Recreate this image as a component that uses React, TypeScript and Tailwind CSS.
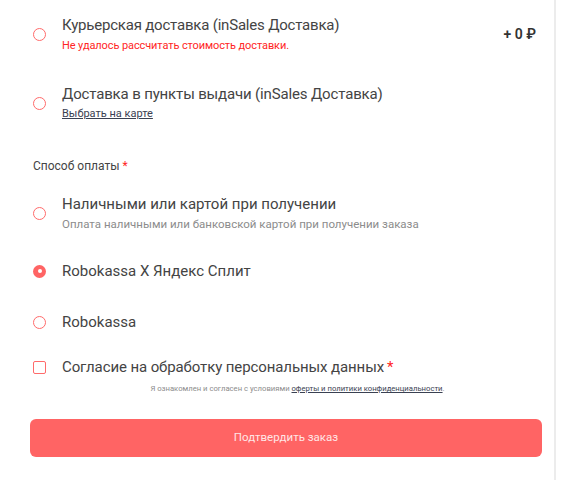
import React from "react";

function Radio({ checked = false }: { checked?: boolean }) {
  return checked ? (
    <span className="flex h-[13px] w-[13px] shrink-0 items-center justify-center rounded-full bg-[#ff6464]">
      <span className="h-[4px] w-[4px] rounded-full bg-white" />
    </span>
  ) : (
    <span className="block h-[13px] w-[13px] shrink-0 rounded-full border-[1.8px] border-[#ff6b6b]" />
  );
}

export default function App() {
  return (
    <div className="bg-white" style={{ fontFamily: "Roboto, 'Noto Sans', sans-serif" }}>
      <div className="flex h-[480px] w-[556px] flex-col border-r-2 border-[#ececec] pt-[15px]">
        <div className="flex items-center pl-[33px] pr-[18px]">
          <Radio />
          <div className="ml-[16px] flex-1">
            <div className="text-[15px] leading-[20px] tracking-[-0.2px] text-[#444]">Курьерская доставка (inSales Доставка)</div>
            <div className="mt-[3px] text-[11px] leading-[16px] tracking-[-0.1px] text-[#ff2525]">Не удалось рассчитать стоимость доставки.</div>
          </div>
          <div className="text-[14px] font-semibold text-[#333]">+ 0 ₽</div>
        </div>

        <div className="mt-[30px] flex items-center pl-[33px]">
          <Radio />
          <div className="ml-[16px]">
            <div className="text-[15px] leading-[20px] tracking-[-0.15px] text-[#444]">Доставка в пункты выдачи (inSales Доставка)</div>
            <div className="mt-[2px] text-[11px] leading-[16px] text-[#3a4152] underline">Выбрать на карте</div>
          </div>
        </div>

        <div className="mt-[36px] pl-[33px] text-[12px] leading-[16px] text-[#444]">
          Способ оплаты<span className="ml-[3px] text-[#ff2525]">*</span>
        </div>

        <div className="mt-[20px] flex items-center pl-[33px]">
          <Radio />
          <div className="ml-[16px]">
            <div className="text-[15px] leading-[20px] text-[#444]">Наличными или картой при получении</div>
            <div className="mt-[2px] text-[11.5px] leading-[16px] text-[#8c8c8c]">Оплата наличными или банковской картой при получении заказа</div>
          </div>
        </div>

        <div className="mt-[29px] flex items-center pl-[33px]">
          <Radio checked />
          <div className="ml-[16px] text-[15px] leading-[20px] text-[#444]">Robokassa X Яндекс Сплит</div>
        </div>

        <div className="mt-[31px] flex items-center pl-[33px]">
          <Radio />
          <div className="ml-[16px] text-[15px] leading-[20px] text-[#444]">Robokassa</div>
        </div>

        <div className="mt-[25px] flex items-center pl-[33px]">
          <span className="block h-[13px] w-[13px] shrink-0 rounded-[2px] border-[1.8px] border-[#ff6b6b]" />
          <div className="ml-[16px] text-[15px] leading-[20px] tracking-[-0.1px] text-[#444]">
            Согласие на обработку персональных данных<span className="ml-[3px] text-[#ff2525]">*</span>
          </div>
        </div>

        <div className="mt-[6px] pl-[62px] pr-[21px] text-center text-[7.7px] leading-[12px] text-[#8c8c8c]">
          Я ознакомлен и согласен с условиями <span className="text-[#3a4152] underline">оферты и политики конфиденциальности</span>.
        </div>

        <div className="ml-[30px] mt-[24px] flex h-[38px] w-[512px] items-center justify-center rounded-[6px] bg-[#ff6464] text-[11.5px] text-[#ffe6e6]">
          Подтвердить заказ
        </div>
      </div>
    </div>
  );
}
